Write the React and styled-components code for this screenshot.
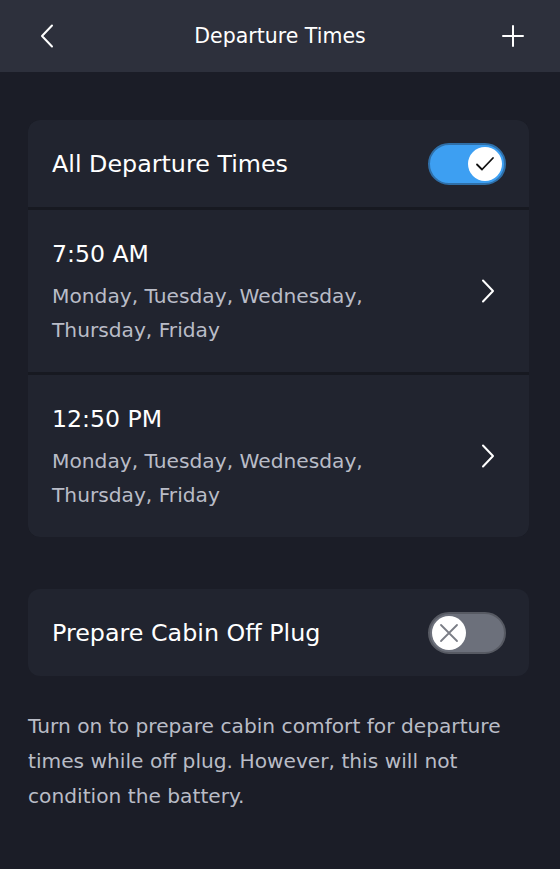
import React, { useState } from 'react';
import styled, { createGlobalStyle } from 'styled-components';

const GlobalStyle = createGlobalStyle`
  html, body {
    margin: 0;
    padding: 0;
    background: #1b1d27;
  }
  body {
    font-family: 'DejaVu Sans', 'Noto Sans', sans-serif;
    color: #fff;
  }
`;

const departures = [
  { id: 1, time: '7:50 AM', days: 'Monday, Tuesday, Wednesday, Thursday, Friday' },
  { id: 2, time: '12:50 PM', days: 'Monday, Tuesday, Wednesday, Thursday, Friday' },
];

const ChevronLeft = () => (
  <svg width="14" height="24" viewBox="0 0 14 24" fill="none">
    <path d="M12 1.5L2 12l10 10.5" stroke="#fff" strokeWidth="2" strokeLinecap="round" strokeLinejoin="round" />
  </svg>
);

const ChevronRight = () => (
  <svg width="14" height="24" viewBox="0 0 14 24" fill="none">
    <path d="M2 1.5L12 12 2 22.5" stroke="#fff" strokeWidth="2" strokeLinecap="round" strokeLinejoin="round" />
  </svg>
);

const Plus = () => (
  <svg width="22" height="22" viewBox="0 0 22 22" fill="none">
    <path d="M11 1v20M1 11h20" stroke="#fff" strokeWidth="2" strokeLinecap="round" />
  </svg>
);

const Toggle = ({ on, onClick }) => (
  <Track $on={on} onClick={onClick}>
    <Knob>
      {on ? (
        <svg width="22" height="22" viewBox="0 0 22 22" fill="none">
          <path d="M3 11.5l5 5L19 5" stroke="#111" strokeWidth="1.8" strokeLinecap="round" strokeLinejoin="round" />
        </svg>
      ) : (
        <svg width="22" height="22" viewBox="0 0 22 22" fill="none">
          <path d="M3 3l16 16M19 3L3 19" stroke="#7a7d86" strokeWidth="1.8" strokeLinecap="round" />
        </svg>
      )}
    </Knob>
  </Track>
);

const App = () => {
  const [allOn, setAllOn] = useState(true);
  const [cabinOn, setCabinOn] = useState(false);

  return (
    <Page>
      <GlobalStyle />
      <Header>
        <IconButton><ChevronLeft /></IconButton>
        <Title>Departure Times</Title>
        <IconButton><Plus /></IconButton>
      </Header>
      <Content>
        <Card>
          <ToggleRow>
            <RowLabel>All Departure Times</RowLabel>
            <Toggle on={allOn} onClick={() => setAllOn(!allOn)} />
          </ToggleRow>
          {departures.map((d) => (
            <TimeRow key={d.id}>
              <TimeInfo>
                <TimeLabel>{d.time}</TimeLabel>
                <Days>{d.days}</Days>
              </TimeInfo>
              <ChevronRight />
            </TimeRow>
          ))}
        </Card>
        <Card>
          <ToggleRow>
            <RowLabel>Prepare Cabin Off Plug</RowLabel>
            <Toggle on={cabinOn} onClick={() => setCabinOn(!cabinOn)} />
          </ToggleRow>
        </Card>
        <Note>
          Turn on to prepare cabin comfort for departure times while off plug. However, this will not condition the battery.
        </Note>
      </Content>
    </Page>
  );
};

const Page = styled.div`
  min-height: 869px;
  background: #1b1d27;
`;

const Header = styled.div`
  height: 72px;
  background: #2d303c;
  display: flex;
  align-items: center;
  justify-content: space-between;
  padding: 0 36px 0 36px;
  box-sizing: border-box;
`;

const IconButton = styled.div`
  width: 22px;
  height: 24px;
  display: flex;
  align-items: center;
  justify-content: center;
  cursor: pointer;
`;

const Title = styled.div`
  font-size: 20.5px;
  color: #fff;
`;

const Content = styled.div`
  padding: 48px 31px 0 28px;
  display: flex;
  flex-direction: column;
  gap: 52px;
`;

const Card = styled.div`
  background: #171921;
  border-radius: 12px;
  overflow: hidden;
  display: flex;
  flex-direction: column;
  gap: 3px;
`;

const ToggleRow = styled.div`
  height: 87px;
  display: flex;
  align-items: center;
  justify-content: space-between;
  padding: 0 23px 0 24px;
  background: #21242f;
`;

const RowLabel = styled.div`
  font-size: 23.8px;
  color: #fff;
`;

const TimeRow = styled.div`
  height: 162px;
  display: flex;
  align-items: center;
  justify-content: space-between;
  padding: 0 34px 0 24px;
  background: #21242f;
`;

const TimeInfo = styled.div`
  display: flex;
  flex-direction: column;
  padding-top: 4px;
`;

const TimeLabel = styled.div`
  font-size: 23.6px;
  line-height: 30px;
  color: #fff;
  margin-bottom: 10px;
`;

const Days = styled.div`
  font-size: 20.2px;
  line-height: 34px;
  color: #b9bcc7;
  max-width: 340px;
`;

const Track = styled.div`
  width: 78px;
  height: 42px;
  border-radius: 21px;
  box-sizing: border-box;
  padding: 4px;
  display: flex;
  justify-content: ${(p) => (p.$on ? 'flex-end' : 'flex-start')};
  background: ${(p) => (p.$on ? '#3d9ff2' : '#6c707b')};
  border: 2px solid ${(p) => (p.$on ? '#2f6fa8' : '#575a63')};
  cursor: pointer;
`;

const Knob = styled.div`
  width: 34px;
  height: 34px;
  margin: -2px;
  border-radius: 50%;
  background: #fff;
  display: flex;
  align-items: center;
  justify-content: center;
`;

const Note = styled.p`
  margin: -19px 0 0;
  font-size: 20.2px;
  line-height: 35px;
  color: #b9bcc6;
`;

export default App;
